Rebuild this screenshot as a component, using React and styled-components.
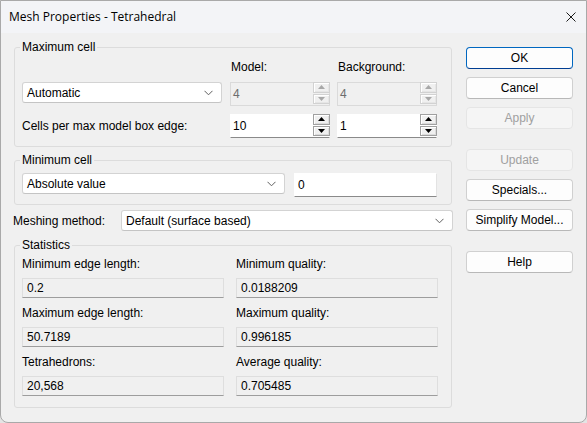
import styled, { createGlobalStyle } from "styled-components";

const GlobalStyle = createGlobalStyle`
  html, body {
    margin: 0;
    padding: 0;
    background: #e4e4e4;
  }
  body {
    font-family: "Liberation Sans", Arial, sans-serif;
    font-size: 12px;
    color: #000;
  }
`;

const STATS = [
  [
    { label: "Minimum edge length:", value: "0.2" },
    { label: "Minimum quality:", value: "0.0188209" },
  ],
  [
    { label: "Maximum edge length:", value: "50.7189" },
    { label: "Maximum quality:", value: "0.996185" },
  ],
  [
    { label: "Tetrahedrons:", value: "20,568" },
    { label: "Average quality:", value: "0.705485" },
  ],
];

const BUTTONS = [
  { label: "OK", gap: 0, primary: true },
  { label: "Cancel", gap: 8 },
  { label: "Apply", gap: 8, disabled: true },
  { label: "Update", gap: 20, disabled: true },
  { label: "Specials...", gap: 8 },
  { label: "Simplify Model...", gap: 8 },
  { label: "Help", gap: 20 },
];

function Chevron() {
  return (
    <ChevronIcon width="9" height="6" viewBox="0 0 9 6">
      <path d="M0.5 0.8 L4.5 4.8 L8.5 0.8" fill="none" stroke="#5f5f5f" strokeWidth="1" />
    </ChevronIcon>
  );
}

function Combo({ value, width }) {
  return (
    <StyledCombo $width={width}>
      <span>{value}</span>
      <Chevron />
    </StyledCombo>
  );
}

function SpinBox({ value, disabled }) {
  return (
    <StyledSpin $disabled={disabled}>
      <SpinText>{value}</SpinText>
      <SpinButtons>
        <SpinArrow $disabled={disabled}>
          <svg width="7" height="4" viewBox="0 0 7 4">
            <path d="M0 4 L3.5 0 L7 4 Z" fill={disabled ? "#a8a8a8" : "#000"} />
          </svg>
        </SpinArrow>
        <SpinArrow $disabled={disabled}>
          <svg width="7" height="4" viewBox="0 0 7 4">
            <path d="M0 0 L3.5 4 L7 0 Z" fill={disabled ? "#a8a8a8" : "#000"} />
          </svg>
        </SpinArrow>
      </SpinButtons>
    </StyledSpin>
  );
}

export default function App() {
  return (
    <>
      <GlobalStyle />
      <Window>
        <TitleBar>
          <Title>Mesh Properties - Tetrahedral</Title>
          <CloseIcon width="10" height="10" viewBox="0 0 10 10">
            <path d="M0.5 0.5 L9.5 9.5 M9.5 0.5 L0.5 9.5" stroke="#1a1a1a" strokeWidth="1" />
          </CloseIcon>
        </TitleBar>

        <Body>
          <LeftColumn>
            <Group>
              <Legend>Maximum cell</Legend>
              <MaxGrid>
                <span />
                <ColumnHead>Model:</ColumnHead>
                <ColumnHead>Background:</ColumnHead>

                <Combo value="Automatic" width={200} />
                <SpinBox value="4" disabled />
                <SpinBox value="4" disabled />

                <RowLabel>Cells per max model box edge:</RowLabel>
                <SpinBox value="10" />
                <SpinBox value="1" />
              </MaxGrid>
            </Group>

            <Group $top={6} $bottom={7}>
              <Legend>Minimum cell</Legend>
              <MinRow>
                <Combo value="Absolute value" width={263} />
                <Edit>0</Edit>
              </MinRow>
            </Group>

            <MeshRow>
              <span>Meshing method:</span>
              <Combo value="Default (surface based)" width={332} />
            </MeshRow>

            <Group $top={7} $pad={5} $bottom={11}>
              <Legend>Statistics</Legend>
              <StatsGrid>
                {STATS.flat().map((s) => (
                  <Stat key={s.label}>
                    <span>{s.label}</span>
                    <ReadOnly>{s.value}</ReadOnly>
                  </Stat>
                ))}
              </StatsGrid>
            </Group>
          </LeftColumn>

          <ButtonColumn>
            {BUTTONS.map((b) => (
              <DialogButton
                key={b.label}
                $gap={b.gap}
                $primary={b.primary}
                $disabled={b.disabled}
              >
                {b.label}
              </DialogButton>
            ))}
          </ButtonColumn>
        </Body>
      </Window>
    </>
  );
}

const Window = styled.div`
  width: 587px;
  height: 423px;
  box-sizing: border-box;
  border: 1px solid #a9a9a9;
  border-radius: 0 0 8px 8px;
  background: #f0f0f0;
  overflow: hidden;
  display: flex;
  flex-direction: column;
`;

const TitleBar = styled.div`
  height: 30px;
  flex-shrink: 0;
  background: #f3f4f7;
  display: flex;
  align-items: center;
  justify-content: space-between;
  padding: 0 10px 2px 8px;
`;

const Title = styled.span`
  font-family: "Open Sans", "Noto Sans", sans-serif;
  font-size: 12px;
  color: #000;
`;

const CloseIcon = styled.svg`
  display: block;
  margin-top: 2px;
`;

const Body = styled.div`
  display: flex;
  gap: 14px;
  padding: 7px 0 0 13px;
`;

const LeftColumn = styled.div`
  width: 438px;
  display: flex;
  flex-direction: column;
`;

const Group = styled.fieldset`
  margin: ${(p) => p.$top ?? 0}px 0 0 0;
  padding: ${(p) => p.$pad ?? 6}px 7px ${(p) => p.$bottom ?? 8}px 7px;
  border: 1px solid #dcdcdc;
  border-radius: 3px;
  min-width: 0;
`;

const Legend = styled.legend`
  padding: 0 2px;
  margin-left: -2px;
  line-height: 14px;
`;

const MaxGrid = styled.div`
  display: grid;
  grid-template-columns: 208px 107px 100px;
  grid-template-rows: 14px 24px 24px;
  row-gap: 8px;
  align-items: center;
`;

const ColumnHead = styled.span`
  padding-left: 1px;
  line-height: 14px;
`;

const RowLabel = styled.span`
  line-height: 14px;
`;

const StyledCombo = styled.div`
  width: ${(p) => p.$width}px;
  height: 21px;
  box-sizing: border-box;
  background: #fff;
  border: 1px solid #d3d3d3;
  border-bottom-color: #c4c4c4;
  border-radius: 3px;
  display: flex;
  align-items: center;
  justify-content: space-between;
  padding: 0 8px 0 4px;
  align-self: start;
`;

const ChevronIcon = styled.svg`
  display: block;
`;

const StyledSpin = styled.div`
  width: 100px;
  height: 24px;
  box-sizing: border-box;
  display: flex;
  align-items: stretch;
  background: ${(p) => (p.$disabled ? "#f0f0f0" : "#fff")};
  border: 1px solid ${(p) => (p.$disabled ? "#dadada" : "#fff")};
  border-bottom-color: ${(p) => (p.$disabled ? "#dadada" : "#8a8a8a")};
  color: ${(p) => (p.$disabled ? "#6d6d6d" : "#000")};
`;

const SpinText = styled.span`
  flex: 1;
  display: flex;
  align-items: center;
  padding-left: 2px;
`;

const SpinButtons = styled.div`
  width: 17px;
  display: flex;
  flex-direction: column;
  gap: 1px;
  margin: -1px -1px 1px 0;
`;

const SpinArrow = styled.div`
  flex: 1;
  box-sizing: border-box;
  display: flex;
  align-items: center;
  justify-content: center;
  background: #f0f0f0;
  border: 1px solid ${(p) => (p.$disabled ? "#d2d2d2" : "#a0a0a0")};
  box-shadow: inset 1px 1px 0 #fff, inset -1px -1px 0 ${(p) => (p.$disabled ? "#e6e6e6" : "#dcdcdc")};

  svg {
    display: block;
  }
`;

const MinRow = styled.div`
  display: flex;
  gap: 9px;
  height: 24px;
`;

const Edit = styled.div`
  width: 143px;
  height: 24px;
  box-sizing: border-box;
  background: #fff;
  border: 1px solid #e3e3e3;
  border-left-color: #fff;
  border-top-color: #fff;
  border-bottom-color: #8a8a8a;
  display: flex;
  align-items: center;
  padding-left: 3px;
`;

const MeshRow = styled.div`
  margin-top: 5px;
  height: 21px;
  display: flex;
  align-items: center;
  justify-content: space-between;
  margin-left: -1px;
  margin-right: -1px;
`;

const StatsGrid = styled.div`
  display: grid;
  grid-template-columns: 202px 202px;
  column-gap: 12px;
  row-gap: 8px;
`;

const Stat = styled.div`
  display: flex;
  flex-direction: column;
  gap: 7px;
  line-height: 14px;
`;

const ReadOnly = styled.div`
  height: 20px;
  box-sizing: border-box;
  background: #f0f0f0;
  border: 1px solid #dedede;
  border-bottom-color: #9d9d9d;
  display: flex;
  align-items: center;
  padding-left: 4px;
`;

const ButtonColumn = styled.div`
  width: 107px;
  display: flex;
  flex-direction: column;
  margin-top: 7px;
`;

const DialogButton = styled.div`
  margin-top: ${(p) => p.$gap}px;
  height: 22px;
  box-sizing: border-box;
  border-radius: 4px;
  display: flex;
  align-items: center;
  justify-content: center;
  background: ${(p) => (p.$disabled ? "#f5f5f5" : "#fdfdfd")};
  border: 1px solid
    ${(p) => (p.$primary ? "#0067c0" : p.$disabled ? "#e5e5e5" : "#d0d0d0")};
  border-bottom-color: ${(p) =>
    p.$primary ? "#003e92" : p.$disabled ? "#e5e5e5" : "#b8b8b8"};
  color: ${(p) => (p.$disabled ? "#a0a0a0" : "#000")};
`;
